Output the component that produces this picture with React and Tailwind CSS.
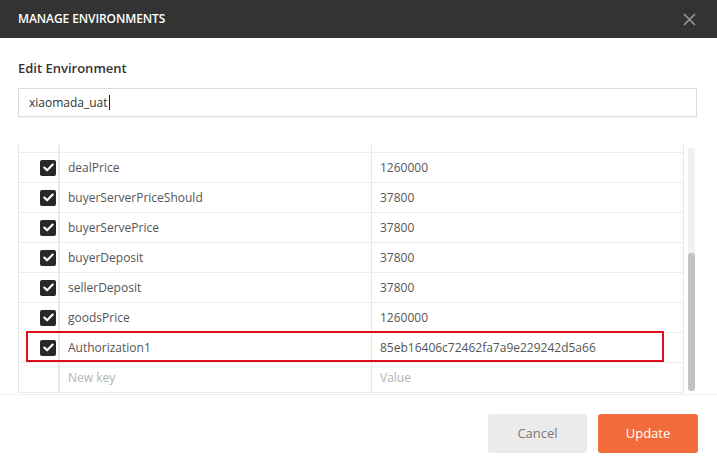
import React from "react";

const rows = [
  { key: "dealPrice", value: "1260000" },
  { key: "buyerServerPriceShould", value: "37800" },
  { key: "buyerServePrice", value: "37800" },
  { key: "buyerDeposit", value: "37800" },
  { key: "sellerDeposit", value: "37800" },
  { key: "goodsPrice", value: "1260000" },
  { key: "Authorization1", value: "85eb16406c72462fa7a9e229242d5a66", marked: true },
];

const Check = () => (
  <div className="w-4 h-4 rounded-[2px] bg-[#282828] flex items-center justify-center">
    <svg width="11" height="9" viewBox="0 0 11 9" fill="none">
      <path d="M1.3 4.6 L4.1 7.3 L9.7 1.6" stroke="white" strokeWidth="2.1" strokeLinecap="round" strokeLinejoin="round" />
    </svg>
  </div>
);

const Row = ({ item, placeholder }) => (
  <div className="relative flex h-[30px] border-b border-[#ececec] text-[12px]">
    <div className="w-[41px] flex items-center justify-end pr-[2px] border-r-2 border-[#e9e9e9]">
      {item && <Check />}
    </div>
    <div
      className={
        "w-[312px] flex items-center pl-[8px] border-r border-[#e6e6e6] " +
        (placeholder ? "text-[#b3b3b3]" : "text-[#555]")
      }
    >
      {placeholder ? "New key" : item.key}
    </div>
    <div
      className={
        "flex-1 flex items-center pl-[8px] " + (placeholder ? "text-[#b3b3b3]" : "text-[#555]")
      }
    >
      {placeholder ? "Value" : item.value}
    </div>
    {item && item.marked && (
      <div className="absolute left-[7px] top-[-2px] w-[638px] h-[31px] border-2 border-[#d9101a]" />
    )}
  </div>
);

const App = () => {
  return (
    <div
      className="w-[717px] h-[473px] bg-white flex flex-col overflow-hidden"
      style={{ fontFamily: '"Open Sans", "Liberation Sans", sans-serif' }}
    >
      <div className="h-[38px] bg-[#333333] flex items-center justify-between pl-[18px] pr-[21px] shrink-0">
        <span className="text-white text-[12px] font-semibold tracking-[-0.1px]">MANAGE ENVIRONMENTS</span>
        <svg width="13" height="13" viewBox="0 0 13 13">
          <path d="M1 1 L12 12 M12 1 L1 12" stroke="#9a9a9a" strokeWidth="1.6" />
        </svg>
      </div>

      <div className="px-[18px] pt-[21px]">
        <div className="text-[13px] font-semibold text-[#333] leading-[18px]">Edit Environment</div>
        <div className="mt-[11px] mr-[2px] h-[29px] border border-[#dcdcdc] shadow-[0_1px_1px_rgba(0,0,0,0.04)] flex items-center pl-[10px] text-[12px] text-[#333]">
          xiaomada_uat<span className="inline-block w-px h-[15px] bg-[#222] ml-px" />
        </div>
      </div>

      <div className="mt-[28px] flex pl-[18px] pr-[22px] h-[248px]">
        <div className="w-[666px] border-l border-r border-[#e6e6e6] flex flex-col">
          <div className="flex h-[8px] border-b border-[#ececec] shrink-0">
            <div className="w-[41px] border-r-2 border-[#e9e9e9]" />
            <div className="w-[312px] border-r border-[#e6e6e6]" />
            <div className="flex-1" />
          </div>
          {rows.map((r, i) => (
            <Row key={i} item={r} />
          ))}
          <Row placeholder />
        </div>
        <div className="ml-[4px] w-[7px] mt-[2px] mb-[2px] rounded-[3px] bg-[#f1f1f1] flex flex-col justify-end">
          <div className="h-[138px] rounded-[3px] bg-[#c3c3c3]" />
        </div>
      </div>

      <div className="mt-[1px] border-t border-[#efefef] flex justify-end gap-[11px] pt-[19px] pr-[19px]">
        <button className="w-[99px] h-[39px] rounded-[3px] bg-[#ebebeb] text-[#777] text-[13px]">Cancel</button>
        <button className="w-[100px] h-[39px] rounded-[3px] bg-[#f26b3a] text-white text-[13px]">Update</button>
      </div>
    </div>
  );
};

export default App;
